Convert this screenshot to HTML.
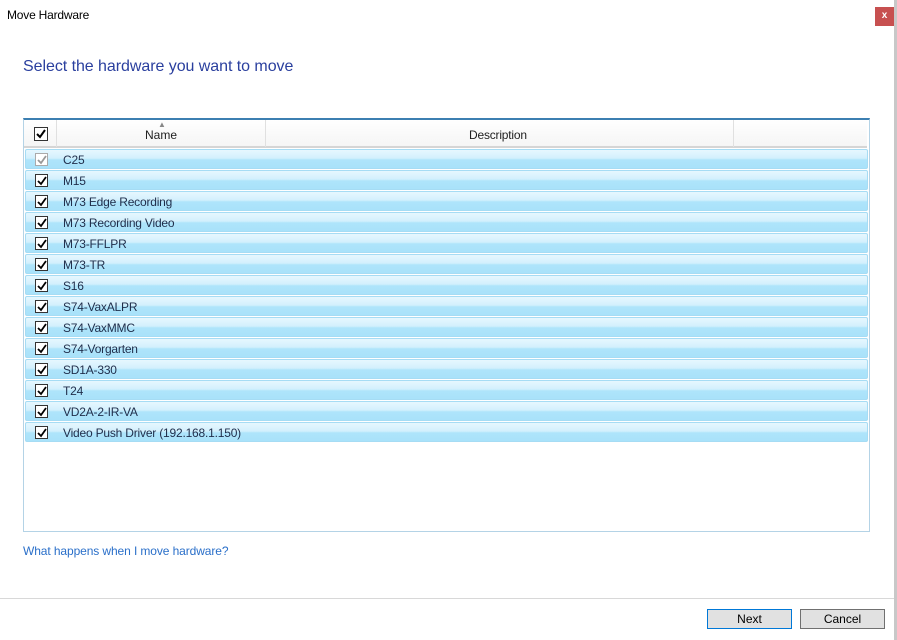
<!DOCTYPE html>
<html><head><style>
*{margin:0;padding:0;box-sizing:border-box}
body{width:897px;height:640px;background:#fff;position:relative;overflow:hidden;font-family:"Liberation Sans",sans-serif;font-size:12px;color:#1e1e1e}
.abs{position:absolute}
.row{position:absolute;left:25px;width:843px;height:20px;border:1px solid #a6dcf4;border-radius:2px;background:linear-gradient(#e6f7fe 0%,#d3f0fd 45%,#aee4fb 55%,#a9e2fa 100%)}
.row .cb{position:absolute;left:9px;top:3px;width:13px;height:13px;border:1px solid #333;background:#fff}
.row .t{position:absolute;left:37px;top:3px;color:#1f2d4a;letter-spacing:-0.2px}
.cb svg{position:absolute;left:1px;top:1px}
.btn{position:absolute;top:609px;width:85px;height:20px;background:#e1e1e1;border:1px solid #adadad;text-align:center;line-height:18px;color:#000}
</style></head><body>
<div class="abs" style="left:7px;top:8px;font-size:12px;color:#000;letter-spacing:-0.2px">Move Hardware</div>
<div class="abs" style="left:875px;top:7px;width:19px;height:19px;background:#c75050;color:#fff;font-size:10px;font-weight:bold;text-align:center;line-height:18px">x</div>
<div class="abs" style="left:894px;top:0;width:3px;height:640px;background:#c8c8c8"></div>
<div class="abs" style="left:23px;top:58px;font-size:16px;color:#2a3f9e;letter-spacing:-0.05px">Select the hardware you want to move</div>
<div class="abs" style="left:23px;top:118px;width:847px;height:414px;border:1px solid #b4d3e6;border-top:2px solid #3c7fb1"></div>
<div class="abs" style="left:24px;top:120px;width:843px;height:28px;background:linear-gradient(#fff,#f5f5f5);border-bottom:2px solid #d5d5d5"></div>
<div class="abs" style="left:56px;top:120px;width:1px;height:27px;background:#e0e0e0"></div>
<div class="abs" style="left:265px;top:120px;width:1px;height:27px;background:#e0e0e0"></div>
<div class="abs" style="left:733px;top:120px;width:1px;height:27px;background:#e0e0e0"></div>
<div class="abs" style="left:34px;top:127px;width:14px;height:14px;border:1px solid #333;background:#fff"><svg width="12" height="12" style="position:absolute;left:0;top:0"><path d="M2 6 L5 9 L10 2" stroke="#000" stroke-width="2" fill="none"/></svg></div>
<div class="abs" style="left:158px;top:120px;font-size:8px;color:#888">▲</div>
<div class="abs" style="left:145px;top:128px">Name</div>
<div class="abs" style="left:469px;top:128px;letter-spacing:-0.2px">Description</div>

<div class="row" style="top:149px"><div class="cb" style="border-color:#aaa"><svg width="11" height="11"><path d="M1 5 L4 8 L9 1" stroke="#999" stroke-width="1.8" fill="none"/></svg></div><div class="t">C25</div></div>
<div class="row" style="top:170px"><div class="cb"><svg width="11" height="11"><path d="M1 5 L4 8 L9 1" stroke="#000" stroke-width="1.8" fill="none"/></svg></div><div class="t">M15</div></div>
<div class="row" style="top:191px"><div class="cb"><svg width="11" height="11"><path d="M1 5 L4 8 L9 1" stroke="#000" stroke-width="1.8" fill="none"/></svg></div><div class="t">M73 Edge Recording</div></div>
<div class="row" style="top:212px"><div class="cb"><svg width="11" height="11"><path d="M1 5 L4 8 L9 1" stroke="#000" stroke-width="1.8" fill="none"/></svg></div><div class="t">M73 Recording Video</div></div>
<div class="row" style="top:233px"><div class="cb"><svg width="11" height="11"><path d="M1 5 L4 8 L9 1" stroke="#000" stroke-width="1.8" fill="none"/></svg></div><div class="t">M73-FFLPR</div></div>
<div class="row" style="top:254px"><div class="cb"><svg width="11" height="11"><path d="M1 5 L4 8 L9 1" stroke="#000" stroke-width="1.8" fill="none"/></svg></div><div class="t">M73-TR</div></div>
<div class="row" style="top:275px"><div class="cb"><svg width="11" height="11"><path d="M1 5 L4 8 L9 1" stroke="#000" stroke-width="1.8" fill="none"/></svg></div><div class="t">S16</div></div>
<div class="row" style="top:296px"><div class="cb"><svg width="11" height="11"><path d="M1 5 L4 8 L9 1" stroke="#000" stroke-width="1.8" fill="none"/></svg></div><div class="t">S74-VaxALPR</div></div>
<div class="row" style="top:317px"><div class="cb"><svg width="11" height="11"><path d="M1 5 L4 8 L9 1" stroke="#000" stroke-width="1.8" fill="none"/></svg></div><div class="t">S74-VaxMMC</div></div>
<div class="row" style="top:338px"><div class="cb"><svg width="11" height="11"><path d="M1 5 L4 8 L9 1" stroke="#000" stroke-width="1.8" fill="none"/></svg></div><div class="t">S74-Vorgarten</div></div>
<div class="row" style="top:359px"><div class="cb"><svg width="11" height="11"><path d="M1 5 L4 8 L9 1" stroke="#000" stroke-width="1.8" fill="none"/></svg></div><div class="t">SD1A-330</div></div>
<div class="row" style="top:380px"><div class="cb"><svg width="11" height="11"><path d="M1 5 L4 8 L9 1" stroke="#000" stroke-width="1.8" fill="none"/></svg></div><div class="t">T24</div></div>
<div class="row" style="top:401px"><div class="cb"><svg width="11" height="11"><path d="M1 5 L4 8 L9 1" stroke="#000" stroke-width="1.8" fill="none"/></svg></div><div class="t">VD2A-2-IR-VA</div></div>
<div class="row" style="top:422px"><div class="cb"><svg width="11" height="11"><path d="M1 5 L4 8 L9 1" stroke="#000" stroke-width="1.8" fill="none"/></svg></div><div class="t">Video Push Driver (192.168.1.150)</div></div>

<div class="abs" style="left:23px;top:544px;color:#2a6fc9;letter-spacing:-0.1px">What happens when I move hardware?</div>
<div class="abs" style="left:0;top:598px;width:894px;height:1px;background:#d8d8d8"></div>
<div class="btn" style="left:707px;border-color:#0078d7">Next</div>
<div class="btn" style="left:800px;border-color:#707070">Cancel</div>
</body></html>
